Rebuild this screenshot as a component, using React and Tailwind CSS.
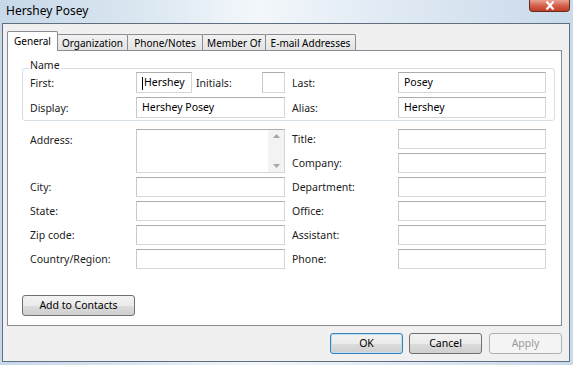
import React from "react";

const font = "[font-family:'Noto_Sans',sans-serif]";
const box = "bg-white border border-[#d3d6da] border-t-[#abadb3] border-l-[#c6c9cd]";

function Input({ w, value, caret }) {
  return (
    <div className={`${box} h-[21px] flex items-center pl-[5px] pt-px text-[10.5px] text-black`} style={{ width: w }}>
      {caret && <span className="w-px h-[13px] bg-black mr-px" />}
      {value}
    </div>
  );
}

function Label({ children, w }) {
  return (
    <div className="text-[10.5px] text-[#1c1c1c] flex items-center pt-[2px]" style={{ width: w }}>
      {children}
    </div>
  );
}

function Btn({ children, w, kind }) {
  const styles = {
    normal: "border-[#707070] bg-[linear-gradient(#f2f2f2_0%,#ebebeb_50%,#dddddd_51%,#cfcfcf_100%)] text-black",
    def: "border-[#3c7fb1] bg-[linear-gradient(#f2f2f2_0%,#ebebeb_50%,#dddddd_51%,#cfcfcf_100%)] text-black shadow-[inset_0_0_0_1px_#b8e0f6]",
    disabled: "border-[#adb2b5] bg-[#f4f4f4] text-[#9a9a9a]",
  };
  return (
    <div
      className={`h-[21px] border rounded-[3px] flex items-center justify-center pt-px text-[10.5px] ${styles[kind || "normal"]}`}
      style={{ width: w }}
    >
      {children}
    </div>
  );
}

const tabs = [
  { name: "Organization", w: 71 },
  { name: "Phone/Notes", w: 76 },
  { name: "Member Of", w: 64 },
  { name: "E-mail Addresses", w: 91 },
];

const lower = [
  ["Title:"],
  ["Company:"],
  ["City:", "Department:"],
  ["State:", "Office:"],
  ["Zip code:", "Assistant:"],
  ["Country/Region:", "Phone:"],
];

export default function App() {
  return (
    <div
      className={`w-[573px] h-[365px] overflow-hidden ${font} bg-[linear-gradient(90deg,#c7d8e8_0%,#dbe7f1_25%,#f3f7fb_45%,#e6eef6_60%,#c9daea_100%)]`}
    >
      {/* title bar */}
      <div className="h-[23px] flex items-start justify-between pl-[6px] pr-[3px]">
        <div className="text-[12px] text-black leading-[20px] pt-px">Hershey Posey</div>
        <div className="w-[41px] h-[12px] rounded-b-[4px] border border-t-0 border-[#6a2a20] bg-[linear-gradient(#e9a294_0%,#d4624d_50%,#c13d25_100%)] flex items-center justify-center">
          <svg width="10" height="9" viewBox="0 0 10 9">
            <path d="M1.5 0.5 L8.5 8.5 M8.5 0.5 L1.5 8.5" stroke="#fff" strokeWidth="2.2" />
          </svg>
        </div>
      </div>

      {/* dialog body */}
      <div className="ml-[2px] w-[568px] h-[339px] bg-[#f0f0f0] border border-[#5f6f80] pl-[4px] pt-[7px]">
        {/* tabs */}
        <div className="flex items-end h-[19px] relative z-10">
          <div className="w-[51px] h-[20px] -mb-px bg-white border border-b-0 border-[#898c95] rounded-t-[2px] flex items-center justify-center text-[10px] text-black">
            General
          </div>
          {tabs.map((t) => (
            <div
              key={t.name}
              className="-ml-px h-[16px] border border-b-0 border-[#898c95] rounded-t-[2px] bg-[linear-gradient(#f2f2f2,#e3e3e3)] flex items-center justify-center pt-px text-[10px] text-black"
              style={{ width: t.w }}
            >
              {t.name}
            </div>
          ))}
        </div>

        {/* panel */}
        <div className="w-[555px] h-[276px] bg-white border border-[#898c95]">
          {/* Name group */}
          <div className="relative ml-[14px] mt-[17px] w-[533px] border border-[#d5dfe5] rounded-[3px] pt-[3px] pb-[2px] pl-[7px] flex flex-col gap-[4px]">
            <span className="absolute left-[6px] -top-[11px] bg-white px-px text-[10.5px] leading-[14px] text-[#1c1c1c]">Name</span>
            <div className="flex h-[21px]">
              <Label w={106}>First:</Label>
              <Input w={56} value="Hershey" caret />
              <div className="ml-[4px] flex">
                <Label w={66}>Initials:</Label>
              </div>
              <Input w={23} />
              <div className="ml-[7px] flex">
                <Label w={106}>Last:</Label>
              </div>
              <Input w={148} value="Posey" />
            </div>
            <div className="flex h-[21px]">
              <Label w={106}>Display:</Label>
              <Input w={149} value="Hershey Posey" />
              <div className="ml-[7px] flex">
                <Label w={106}>Alias:</Label>
              </div>
              <Input w={148} value="Hershey" />
            </div>
          </div>

          {/* address / company */}
          <div className="ml-[22px] mt-[8px] grid grid-cols-[106px_156px_106px_148px] grid-rows-[repeat(6,20px)] gap-y-[4px]">
            <div className="row-span-2 text-[10.5px] text-[#1c1c1c] leading-[20px] pt-[1px]">Address:</div>
            <div className={`${box} row-span-2 w-[149px] h-[44px] flex justify-end`}>
              <div className="w-[16px] h-full bg-[#f3f3f3] flex flex-col items-center justify-between py-[4px]">
                <svg width="7" height="4" viewBox="0 0 7 4">
                  <path d="M0 4 L3.5 0 L7 4 Z" fill="#a7a7a7" />
                </svg>
                <svg width="7" height="4" viewBox="0 0 7 4">
                  <path d="M0 0 L3.5 4 L7 0 Z" fill="#a7a7a7" />
                </svg>
              </div>
            </div>
            {lower.map((r, i) => (
              <React.Fragment key={i}>
                {r.length === 2 && (
                  <>
                    <Label w={106}>{r[0]}</Label>
                    <div className={`${box} w-[149px] h-[20px]`} />
                  </>
                )}
                <Label w={106}>{r.length === 2 ? r[1] : r[0]}</Label>
                <div className={`${box} w-[148px] h-[20px]`} />
              </React.Fragment>
            ))}
          </div>

          <div className="ml-[14px] mt-[26px]">
            <Btn w={113}>Add to Contacts</Btn>
          </div>
        </div>

        {/* dialog buttons */}
        <div className="w-[555px] mt-[7px] flex justify-end gap-[6px]">
          <Btn w={73} kind="def">OK</Btn>
          <div className="mr-px">
            <Btn w={73}>Cancel</Btn>
          </div>
          <Btn w={73} kind="disabled">Apply</Btn>
        </div>
      </div>
    </div>
  );
}
